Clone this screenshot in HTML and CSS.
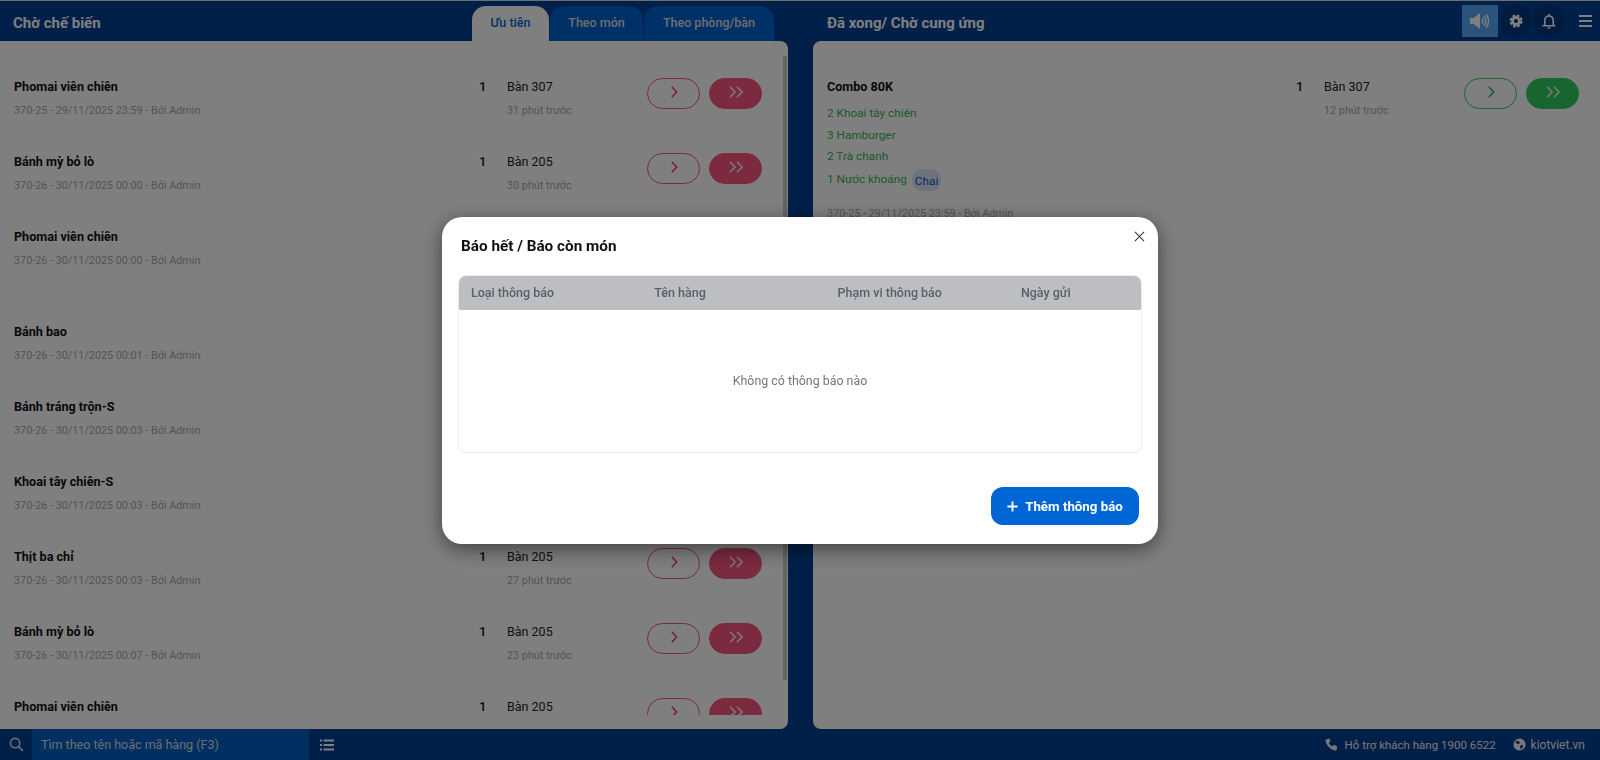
FILE: index.html
```html
<!DOCTYPE html>
<html lang="vi">
<head>
  <meta charset="UTF-8" />
  <title>Màn hình bếp</title>
  <link rel="stylesheet" href="styles.css">
</head>
<body>
  <div class="app">
    <div class="board">
      <!-- Chờ chế biến -->
      <section class="column column-left">
        <header class="column-head">
          <h1>Chờ chế biến</h1>
          <nav class="tabs">
            <a class="tab tab-active">Ưu tiên</a>
            <a class="tab tab-mon">Theo món</a>
            <a class="tab tab-ban">Theo phòng/bàn</a>
          </nav>
        </header>
        <div class="panel panel-scroll">
          <div class="list">
            <div class="row">
              <div class="info"><div class="name">Phomai viên chiên</div><div class="meta">370-25 - 29/11/2025 23:59 - Bởi Admin</div></div>
              <div class="qty">1</div>
              <div class="place"><div class="table-no">Bàn 307</div><div class="meta">31 phút trước</div></div>
              <div class="actions">
                <button class="btn btn-line"><svg viewBox="0 0 16 16"><path d="M5.5 2 11 8l-5.5 6"/></svg></button>
                <button class="btn btn-fill"><svg viewBox="0 0 20 16"><path d="M3 2l6 6-6 6M11 2l6 6-6 6"/></svg></button>
              </div>
            </div>
            <div class="row">
              <div class="info"><div class="name">Bánh mỳ bỏ lò</div><div class="meta">370-26 - 30/11/2025 00:00 - Bởi Admin</div></div>
              <div class="qty">1</div>
              <div class="place"><div class="table-no">Bàn 205</div><div class="meta">30 phút trước</div></div>
              <div class="actions">
                <button class="btn btn-line"><svg viewBox="0 0 16 16"><path d="M5.5 2 11 8l-5.5 6"/></svg></button>
                <button class="btn btn-fill"><svg viewBox="0 0 20 16"><path d="M3 2l6 6-6 6M11 2l6 6-6 6"/></svg></button>
              </div>
            </div>
            <div class="row row-tall">
              <div class="info"><div class="name">Phomai viên chiên</div><div class="meta">370-26 - 30/11/2025 00:00 - Bởi Admin</div></div>
            </div>
            <div class="row">
              <div class="info"><div class="name">Bánh bao</div><div class="meta">370-26 - 30/11/2025 00:01 - Bởi Admin</div></div>
            </div>
            <div class="row">
              <div class="info"><div class="name">Bánh tráng trộn-S</div><div class="meta">370-26 - 30/11/2025 00:03 - Bởi Admin</div></div>
            </div>
            <div class="row">
              <div class="info"><div class="name">Khoai tây chiên-S</div><div class="meta">370-26 - 30/11/2025 00:03 - Bởi Admin</div></div>
            </div>
            <div class="row">
              <div class="info"><div class="name">Thịt ba chỉ</div><div class="meta">370-26 - 30/11/2025 00:03 - Bởi Admin</div></div>
              <div class="qty">1</div>
              <div class="place"><div class="table-no">Bàn 205</div><div class="meta">27 phút trước</div></div>
              <div class="actions">
                <button class="btn btn-line"><svg viewBox="0 0 16 16"><path d="M5.5 2 11 8l-5.5 6"/></svg></button>
                <button class="btn btn-fill"><svg viewBox="0 0 20 16"><path d="M3 2l6 6-6 6M11 2l6 6-6 6"/></svg></button>
              </div>
            </div>
            <div class="row">
              <div class="info"><div class="name">Bánh mỳ bỏ lò</div><div class="meta">370-26 - 30/11/2025 00:07 - Bởi Admin</div></div>
              <div class="qty">1</div>
              <div class="place"><div class="table-no">Bàn 205</div><div class="meta">23 phút trước</div></div>
              <div class="actions">
                <button class="btn btn-line"><svg viewBox="0 0 16 16"><path d="M5.5 2 11 8l-5.5 6"/></svg></button>
                <button class="btn btn-fill"><svg viewBox="0 0 20 16"><path d="M3 2l6 6-6 6M11 2l6 6-6 6"/></svg></button>
              </div>
            </div>
            <div class="row">
              <div class="info"><div class="name">Phomai viên chiên</div></div>
              <div class="qty">1</div>
              <div class="place"><div class="table-no">Bàn 205</div></div>
              <div class="actions">
                <button class="btn btn-line"><svg viewBox="0 0 16 16"><path d="M5.5 2 11 8l-5.5 6"/></svg></button>
                <button class="btn btn-fill"><svg viewBox="0 0 20 16"><path d="M3 2l6 6-6 6M11 2l6 6-6 6"/></svg></button>
              </div>
            </div>
          </div>
          <div class="scroll-thumb"></div>
        </div>
      </section>

      <!-- Đã xong -->
      <section class="column column-right">
        <header class="column-head">
          <h1>Đã xong/ Chờ cung ứng</h1>
          <div class="tools">
            <a class="tool tool-on">
              <svg viewBox="0 0 20 16" width="20" height="16"><path class="solid" d="M0 5h3.500L10 0v16l-6.500-5H0z"/><path class="wave" d="M12 5.500a3.500 3.500 0 0 1 0 5M14 3.500a6.500 6.500 0 0 1 0 9M16 1.500a9.500 9.500 0 0 1 0 13"/></svg>
            </a>
            <a class="tool tool-round">
              <svg viewBox="0 0 16 16" width="14" height="14"><circle class="gear-teeth" cx="8" cy="8" r="6"/><path class="solid" fill-rule="evenodd" d="M8 2.500a5.500 5.500 0 1 0 0 11 5.500 5.500 0 0 0 0-11zm0 3.200a2.300 2.300 0 1 1 0 4.600 2.300 2.300 0 0 1 0-4.600z"/></svg>
            </a>
            <a class="tool tool-round">
              <svg viewBox="0 0 16 18" width="14" height="16"><path class="wave wave-bold" d="M3.200 13V8a4.800 4.800 0 0 1 9.600 0v5l1.500 1.500H1.700zM8 1v2"/><path class="solid" d="M6.200 16h3.600a1.800 1.800 0 0 1-3.600 0z"/></svg>
            </a>
            <a class="tool tool-menu">
              <span></span><span></span><span></span>
            </a>
          </div>
        </header>
        <div class="panel">
          <div class="list">
            <div class="row row-done">
              <div class="info">
                <div class="name">Combo 80K</div>
                <div class="sub-item">2 Khoai tây chiên</div>
                <div class="sub-item">3 Hamburger</div>
                <div class="sub-item">2 Trà chanh</div>
                <div class="sub-item sub-last">1 Nước khoáng <span class="chip">Chai</span></div>
                <div class="meta">370-25 - 29/11/2025 23:59 - Bởi Admin</div>
              </div>
              <div class="qty">1</div>
              <div class="place"><div class="table-no">Bàn 307</div><div class="meta">12 phút trước</div></div>
              <div class="actions">
                <button class="btn btn-line"><svg viewBox="0 0 16 16"><path d="M5.5 2 11 8l-5.5 6"/></svg></button>
                <button class="btn btn-fill"><svg viewBox="0 0 20 16"><path d="M3 2l6 6-6 6M11 2l6 6-6 6"/></svg></button>
              </div>
            </div>
          </div>
        </div>
      </section>
    </div>

    <footer class="bottom">
      <div class="search">
        <span class="search-icon"><svg viewBox="0 0 16 16" width="15" height="15"><circle cx="6.500" cy="6.500" r="5"/><path d="m10.300 10.300 4.500 4.500"/></svg></span>
        <div class="search-input">Tìm theo tên hoặc mã hàng (F3)</div>
      </div>
      <span class="list-icon"><svg viewBox="0 0 14 12" width="14" height="12"><path d="M0 1.500h2M3.500 1.500H14M0 6h2M3.500 6H14M0 10.500h2M3.500 10.500H14"/></svg></span>
      <div class="support">
        <span class="support-item support-phone"><svg viewBox="0 0 16 16" width="13" height="13"><path d="M4.200.800 1.500 1.700C.7 2 .4 2.800.6 3.600c1.300 5.600 5.900 10.300 11.700 11.800.800.200 1.600-.200 1.900-1l.9-2.700c.200-.600 0-1.200-.600-1.500l-3-1.500c-.500-.300-1.100-.100-1.500.300l-1.100 1.400C7 9.400 5.600 8 4.700 6.100l1.400-1.200c.500-.400.600-1 .400-1.500L5.600 1.300C5.300.800 4.700.600 4.200.800z"/></svg>Hỗ trợ khách hàng 1900 6522</span>
        <span class="support-item"><svg viewBox="0 0 16 16" width="13" height="13"><path fill-rule="evenodd" d="M8 .500a7.500 7.500 0 1 0 0 15 7.500 7.500 0 0 0 0-15zM4 3.500l3 .500 1.500 1.500-1 2-2.500-.500-2-1.500zM9.500 8.500l3 .500-1 3.500-2 1-1-2.500z"/></svg>kiotviet.vn</span>
      </div>
    </footer>
  </div>

  <div class="overlay">
    <div class="modal">
      <a class="modal-close"><svg viewBox="0 0 12 12" width="11" height="11"><path d="M1 1l10 10M11 1 1 11"/></svg></a>
      <h2>Báo hết / Báo còn món</h2>
      <div class="notice-table">
        <div class="notice-head">
          <span>Loại thông báo</span>
          <span>Tên hàng</span>
          <span>Phạm vi thông báo</span>
          <span>Ngày gửi</span>
        </div>
        <div class="notice-empty">Không có thông báo nào</div>
      </div>
      <div class="modal-foot">
        <button class="btn-add"><svg viewBox="0 0 12 12" width="11" height="11"><path d="M6 .500v11M.500 6h11"/></svg>Thêm thông báo</button>
      </div>
    </div>
  </div>
</body>
</html>
```

FILE: styles.css
```css
* {
  box-sizing: border-box;
}

body, html {
  margin: 0;
  padding: 0;
  height: 100%;
  font-family: Roboto, "Noto Sans", sans-serif;
  overflow: hidden;
}

.app {
  height: 760px;
  display: flex;
  flex-direction: column;
  background: #004094;
  border-top: 1px solid #ddd;
}

.board {
  flex: 1;
  min-height: 0;
  display: grid;
  grid-template-columns: 788px 787px;
  column-gap: 25px;
}

.column {
  display: flex;
  flex-direction: column;
  min-height: 0;
}

.column-head {
  height: 40px;
  display: flex;
  justify-content: space-between;
  align-items: flex-end;
}

.column-left .column-head {
  padding: 0 14px 0 13px;
}

.column-right .column-head {
  padding: 0 0 0 14px;
}

.column-head h1 {
  margin: 0;
  align-self: center;
  font-size: 15px;
  font-weight: 700;
  color: #fff;
  position: relative;
  top: 2px;
}

.tabs {
  display: flex;
  gap: 1px;
}

.tab {
  height: 35px;
  display: flex;
  align-items: center;
  justify-content: center;
  padding-bottom: 2px;
  border-radius: 14px 14px 0 0;
  background: #0060d0;
  color: #ddd;
  font-size: 12.500px;
  font-weight: 500;
}

.tab-active {
  width: 77px;
  background: #fff;
  color: #0066d6;
}

.tab-mon {
  width: 93px;
}

.tab-ban {
  width: 130px;
}

.panel {
  position: relative;
  flex: 1;
  min-height: 0;
  background: #fff;
  padding-bottom: 14px;
  display: flex;
}

.column-left .panel {
  border-radius: 0 8px 8px 0;
}

.column-right .panel {
  border-radius: 8px 0 0 8px;
}

.list {
  flex: 1;
  overflow: hidden;
  padding-top: 11px;
}

.scroll-thumb {
  position: absolute;
  top: 15px;
  right: 1px;
  width: 4px;
  height: 624px;
  background: #cacaca;
}

.row {
  height: 75px;
  padding: 26px 26px 0 14px;
  display: flex;
  align-items: flex-start;
}

.row-tall {
  height: 95px;
}

.row-done {
  height: auto;
  padding: 26px 21px 0 14px;
}

.info {
  flex: 1;
}

.name {
  font-size: 12.600px;
  line-height: 18px;
  font-weight: 700;
  color: #111;
}

.meta {
  margin-top: 5px;
  font-size: 10.800px;
  line-height: 20px;
  color: #a8a8a8;
}

.qty {
  width: 28px;
  font-size: 13px;
  line-height: 18px;
  font-weight: 500;
  color: #111;
}

.place {
  width: 140px;
}

.table-no {
  font-size: 12.500px;
  line-height: 18px;
  color: #222;
}

.actions {
  display: flex;
  gap: 9px;
}

.btn {
  width: 53px;
  height: 31px;
  padding: 0 0 4px;
  border-radius: 16px;
  border: 1px solid #f85580;
  background: transparent;
  display: flex;
  align-items: center;
  justify-content: center;
}

.btn svg {
  fill: none;
  stroke-width: 1.800;
}

.btn-line svg {
  width: 14px;
  height: 14px;
  stroke: #f03a68;
}

.btn-fill {
  background: #f85580;
}

.btn-fill svg {
  width: 18px;
  height: 14px;
  stroke: #f4f4f4;
}

.row-done .btn {
  border-color: #2eca5e;
}

.row-done .btn-line svg {
  stroke: #22b850;
}

.row-done .btn-fill {
  background: #2eca5e;
}

.sub-item {
  margin-top: 0.5px;
  font-size: 11.800px;
  line-height: 21px;
  color: #36b35c;
}

.name + .sub-item {
  margin-top: 7px;
}

.sub-last {
  margin-top: 2px;
  margin-bottom: 13px;
}

.chip {
  display: inline-block;
  margin-left: 2px;
  padding: 0 3px;
  height: 22px;
  line-height: 24px;
  border-radius: 10px;
  background: #dce7f7;
  color: #0a58c8;
  vertical-align: top;
}

.tools {
  display: flex;
  align-items: center;
  align-self: flex-start;
  margin-top: 4px;
  margin-right: 3px;
}

.tool {
  display: flex;
  align-items: center;
  justify-content: center;
}

.tool-on {
  width: 36px;
  height: 32px;
  background: #56a8f8;
  margin-right: 2px;
}

.tool-round {
  width: 32px;
  height: 32px;
  border-radius: 50%;
  background: #003680;
  margin-right: 1px;
}

.tool-menu {
  width: 31px;
  height: 32px;
  flex-direction: column;
  gap: 3px;
  padding-left: 7px;
}

.tool-menu span {
  width: 13px;
  height: 2px;
  background: #fff;
}

.tool svg .solid {
  fill: #fff;
}

.gear-teeth {
  fill: none;
  stroke: #fff;
  stroke-width: 3;
  stroke-dasharray: 3 1.700;
}

.tool svg .wave {
  fill: none;
  stroke: #fff;
  stroke-width: 1.500;
}

.tool svg .wave-bold {
  stroke-width: 1.800;
}

.bottom {
  height: 31px;
  display: flex;
  align-items: center;
  color: #fff;
}

.search {
  display: flex;
  align-items: stretch;
  height: 100%;
}

.search-icon {
  width: 32px;
  display: flex;
  align-items: center;
  justify-content: center;
}

.search-icon svg {
  fill: none;
  stroke: #ddd;
  stroke-width: 1.700;
}

.search-input {
  width: 277px;
  padding-left: 9px;
  background: #0060c4;
  font-size: 12.500px;
  line-height: 31px;
  color: #ddd;
}

.list-icon {
  margin-left: 11px;
  display: flex;
}

.list-icon svg {
  stroke: #fff;
  stroke-width: 2.200;
}

.support {
  margin-left: auto;
  margin-right: 15px;
  display: flex;
  gap: 17px;
  font-size: 12px;
}

.support-phone {
  font-size: 11.500px;
  gap: 7px;
}

.support-item {
  display: flex;
  align-items: center;
  gap: 5px;
  color: #f0f0f0;
}

.support-phone {
  gap: 7px;
}

.support-item svg {
  fill: #f0f0f0;
}

.overlay {
  position: fixed;
  top: 0;
  left: 0;
  width: 100%;
  height: 100%;
  background: rgba(0,0,0,0.5);
  display: flex;
  justify-content: center;
  align-items: center;
  padding-top: 1px;
}

.modal {
  position: relative;
  width: 716px;
  height: 327px;
  padding: 18px 16px 19px;
  background: #fff;
  border-radius: 20px;
  box-shadow: 0 5px 20px rgba(0,0,0,0.5);
  display: flex;
  flex-direction: column;
}

.modal h2 {
  margin: 1px 0 19px 3px;
  font-size: 15.300px;
  line-height: 20px;
  font-weight: 700;
  color: #111;
}

.modal-close {
  position: absolute;
  top: 14px;
  right: 13px;
  display: flex;
}

.modal-close svg {
  stroke: #333;
  stroke-width: 1.100;
}

.notice-table {
  height: 178px;
  border: 1px solid #eee;
  border-radius: 8px;
  overflow: hidden;
  display: flex;
  flex-direction: column;
}

.notice-head {
  height: 35px;
  margin: -1px -1px 0;
  padding-bottom: 1px;
  display: grid;
  grid-template-columns: repeat(3, 183.300px) 1fr;
  align-items: center;
  background: #bcbec2;
  color: #5a6068;
  font-size: 12.500px;
  font-weight: 500;
}

.notice-head span {
  padding-left: 13px;
}

.notice-empty {
  flex: 1;
  display: flex;
  align-items: center;
  justify-content: center;
  padding-bottom: 2px;
  font-size: 12.400px;
  color: #777;
}

.modal-foot {
  margin-top: auto;
  display: flex;
  justify-content: flex-end;
  padding-right: 3px;
}

.btn-add {
  width: 148px;
  height: 38px;
  border: none;
  border-radius: 12px;
  background: #0066d6;
  color: #fff;
  font-family: inherit;
  font-size: 13.300px;
  font-weight: 700;
  display: flex;
  align-items: center;
  justify-content: center;
  gap: 7px;
}

.btn-add svg {
  stroke: #fff;
  stroke-width: 2;
}
```
